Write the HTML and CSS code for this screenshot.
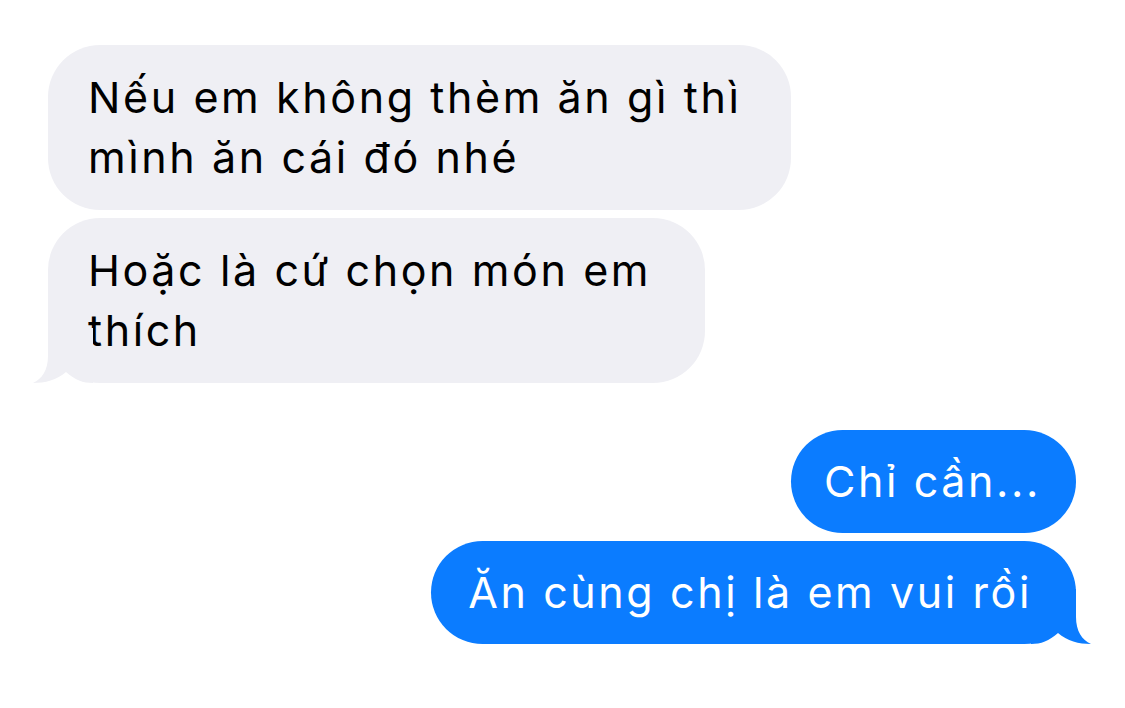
FILE: index.html
```html
<!DOCTYPE html>
<html lang="vi">
<head>
  <meta charset="UTF-8" />
  <meta name="viewport" content="width=device-width, initial-scale=1.0"/>
  <title>Tin nhắn</title>
  <link rel="stylesheet" href="styles.css">
</head>
<body>
  <main class="thread">
    <div class="bubble them">Nếu em không thèm ăn gì thì<br>mình ăn cái đó nhé</div>
    <div class="bubble them tail short">Hoặc là cứ chọn món em<br>thích
      <svg class="tail-left" width="60" height="55" viewBox="0 0 60 55"><path d="M15 0 L15 28 C15 42 9 51 0 55 C12 55 24 52 33 44 C42 52 50 55 60 55 L60 0 Z"/></svg>
    </div>

    <div class="bubble me gap">Chỉ cần...</div>
    <div class="bubble me tail">Ăn cùng chị là em vui rồi
      <svg class="tail-right" width="60" height="55" viewBox="0 0 60 55"><path d="M45 0 L45 28 C45 42 51 51 60 55 C48 55 36 52 27 44 C18 52 10 55 0 55 L0 0 Z"/></svg>
    </div>
  </main>
</body>
</html>
```

FILE: styles.css
```css
body {
  margin: 0;
  background: #ffffff;
  font-family: Inter, "Noto Sans", sans-serif;
}

.thread {
  display: flex;
  flex-direction: column;
  padding: 45px 49px 0 48px;
  gap: 8px;
}

.bubble {
  position: relative;
  font-size: 43px;
  line-height: 60px;
  padding: 22px 50px 23px 40px;
  border-radius: 52px;
  width: fit-content;
  letter-spacing: 2.6px;
}

.them {
  align-self: flex-start;
  background: #efeff4;
  color: #000000;
}

.them.short {
  padding-right: 54px;
}

.me {
  align-self: flex-end;
  background: #0b7cff;
  color: #ffffff;
  padding: 21px 35px 22px 33px;
}

.me.tail {
  padding-right: 44px;
  padding-left: 37px;
}

.gap {
  margin-top: 39px;
}

.tail-left,
.tail-right {
  position: absolute;
  bottom: 0;
}

.tail-left {
  left: -15px;
}

.tail-left path {
  fill: #efeff4;
}

.tail-right {
  right: -15px;
}

.tail-right path {
  fill: #0b7cff;
}
```
